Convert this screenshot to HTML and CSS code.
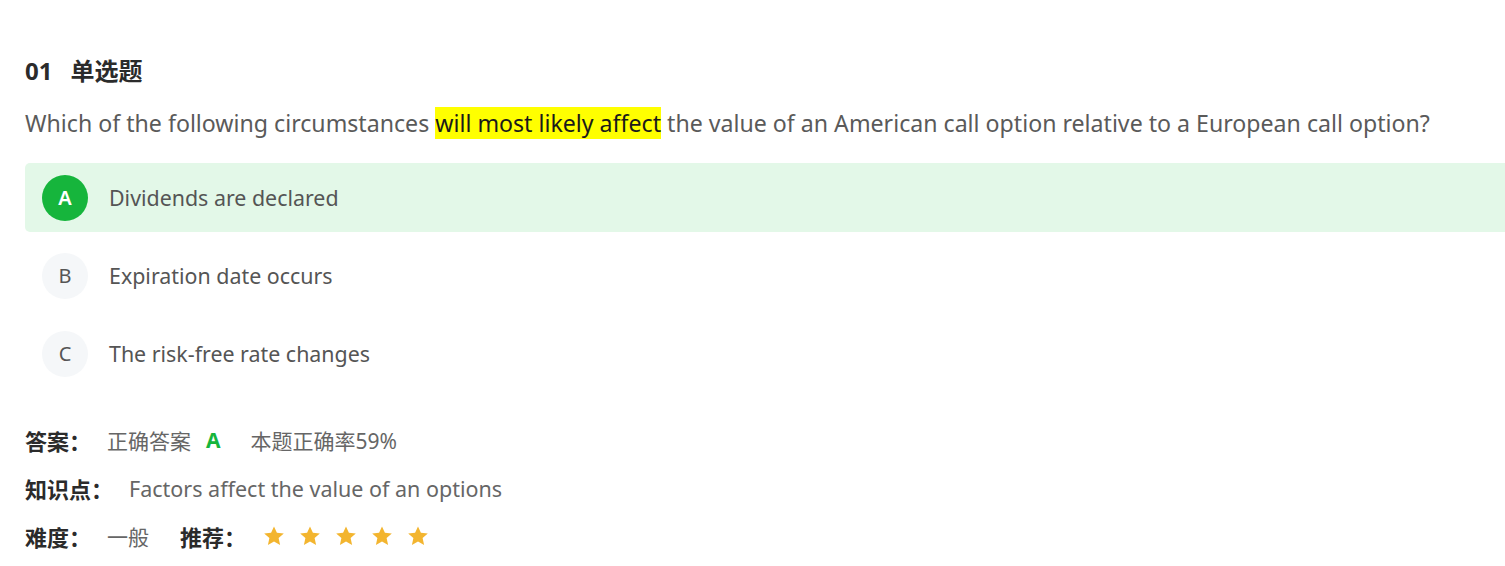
FILE: index.html
```html
<!DOCTYPE html>
<html lang="zh-CN">
<head>
<meta charset="utf-8">
<title>01 单选题</title>
<link rel="stylesheet" href="styles.css">
</head>
<body>
<div class="question">
  <h2 class="q-title"><span class="q-no">01</span><span class="q-type">单选题</span></h2>
  <p class="q-text">Which of the following circumstances <span class="hl">will most likely affect</span> the value of an American call option relative to a European call option?</p>
  <div class="options">
    <div class="option correct"><span class="badge">A</span><span class="opt-text">Dividends are declared</span></div>
    <div class="option"><span class="badge">B</span><span class="opt-text">Expiration date occurs</span></div>
    <div class="option"><span class="badge">C</span><span class="opt-text">The risk-free rate changes</span></div>
  </div>
  <div class="meta">
    <div class="meta-row"><span class="label">答案：</span><span class="val">正确答案</span><span class="ans">A</span><span class="val">本题正确率59%</span></div>
    <div class="meta-row"><span class="label">知识点：</span><span class="val kp">Factors affect the value of an options</span></div>
    <div class="meta-row"><span class="label">难度：</span><span class="val">一般</span><span class="label rec">推荐：</span>
      <span class="stars">
        <svg class="star" viewBox="0 0 24 24"><path d="M12 2.5l2.9 6.3 6.9.7-5.2 4.6 1.5 6.8L12 17.4l-6.1 3.5 1.5-6.8-5.2-4.6 6.9-.7z"/></svg>
        <svg class="star" viewBox="0 0 24 24"><path d="M12 2.5l2.9 6.3 6.9.7-5.2 4.6 1.5 6.8L12 17.4l-6.1 3.5 1.5-6.8-5.2-4.6 6.9-.7z"/></svg>
        <svg class="star" viewBox="0 0 24 24"><path d="M12 2.5l2.9 6.3 6.9.7-5.2 4.6 1.5 6.8L12 17.4l-6.1 3.5 1.5-6.8-5.2-4.6 6.9-.7z"/></svg>
        <svg class="star" viewBox="0 0 24 24"><path d="M12 2.5l2.9 6.3 6.9.7-5.2 4.6 1.5 6.8L12 17.4l-6.1 3.5 1.5-6.8-5.2-4.6 6.9-.7z"/></svg>
        <svg class="star" viewBox="0 0 24 24"><path d="M12 2.5l2.9 6.3 6.9.7-5.2 4.6 1.5 6.8L12 17.4l-6.1 3.5 1.5-6.8-5.2-4.6 6.9-.7z"/></svg>
      </span>
    </div>
  </div>
</div>
</body>
</html>
```

FILE: styles.css
```css
html, body {
  margin: 0;
  padding: 0;
  background: #ffffff;
}
body {
  font-family: "Noto Sans", "Noto Sans CJK SC", sans-serif;
  color: #595959;
  overflow: hidden;
}
.question {
  padding: 55px 0 0 25px;
}
.q-title {
  margin: 0;
  height: 32px;
  line-height: 32px;
  font-size: 24px;
  font-weight: 700;
  color: #2b2b2b;
}
.q-no {
  margin-right: 18px;
}
.q-text {
  margin: 19px 0 0 0;
  font-size: 23.15px;
  line-height: 34px;
  height: 34px;
  white-space: nowrap;
  color: #5a5a5a;
}
.hl {
  background: #ffff00;
  color: #1a1a1a;
}
.options {
  margin-top: 23px;
  display: flex;
  flex-direction: column;
  gap: 9px;
}
.option {
  display: flex;
  align-items: center;
  height: 69px;
  padding-left: 17px;
  border-radius: 4px;
}
.option.correct {
  background: #e3f8e8;
  border-radius: 5px 0 0 5px;
}
.badge {
  width: 46px;
  height: 46px;
  border-radius: 50%;
  background: #f5f7f9;
  color: #555;
  font-size: 20px;
  display: flex;
  align-items: center;
  justify-content: center;
  margin-right: 21px;
  flex-shrink: 0;
}
.option.correct .badge {
  background: #16b53c;
  color: #ffffff;
  font-weight: 600;
}
.opt-text {
  font-size: 21.4px;
  color: #555;
}
.meta {
  margin-top: 35px;
  display: flex;
  flex-direction: column;
  gap: 14px;
}
.meta-row {
  display: flex;
  align-items: center;
  height: 34px;
  font-size: 21px;
}
.label {
  font-weight: 700;
  color: #2b2b2b;
  font-size: 22px;
  margin-right: 16px;
}
.val {
  color: #666;
}
.ans {
  color: #16b53c;
  font-weight: 700;
  margin: 0 30px 0 15px;
}
.kp {
  font-size: 21.5px;
}
.label.rec {
  margin-left: 31px;
  margin-right: 16px;
}
.stars {
  display: flex;
  gap: 12px;
}
.star {
  width: 24px;
  height: 24px;
  fill: #f3b52f;
}
```
